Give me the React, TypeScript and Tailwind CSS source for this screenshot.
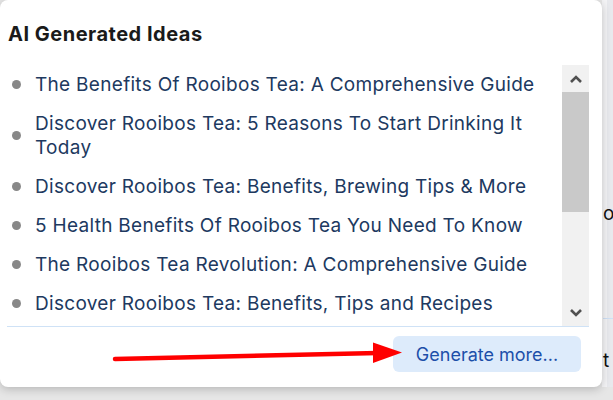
const ideas = [
  "The Benefits Of Rooibos Tea: A Comprehensive Guide",
  "Discover Rooibos Tea: 5 Reasons To Start Drinking It Today",
  "Discover Rooibos Tea: Benefits, Brewing Tips & More",
  "5 Health Benefits Of Rooibos Tea You Need To Know",
  "The Rooibos Tea Revolution: A Comprehensive Guide",
  "Discover Rooibos Tea: Benefits, Tips and Recipes",
];

const Chevron = ({ up }: { up?: boolean }) => (
  <svg width="14" height="10" viewBox="0 0 14 10" className={up ? "" : "rotate-180"}>
    <path d="M2 8 L7 3 L12 8" fill="none" stroke="#505050" strokeWidth="2.6" />
  </svg>
);

export default function App() {
  return (
    <div className="relative w-[613px] h-[400px] overflow-hidden bg-[#e7e7e7] font-['Inter','Noto_Sans',sans-serif]">
      <div className="flex h-[387px]">
        {/* popup panel */}
        <div className="relative z-10 w-[602px] shrink-0 rounded-[8px] bg-white pt-[20px] shadow-[0_2px_10px_rgba(0,0,0,0.22)]">
          <h2 className="px-2 text-[20px] font-bold leading-[28px] tracking-[0.5px] text-[#1a1a1a]">AI Generated Ideas</h2>

          <div className="mx-[7px] mt-[17px] flex h-[262px] w-[582px] border-b border-[#cfe2f6]">
            <ul className="flex-1 overflow-hidden">
              {ideas.map((idea) => (
                <li key={idea} className="flex items-center py-[7.5px] pl-[5px]">
                  <span className="h-[9px] w-[9px] shrink-0 rounded-full bg-[#888888]" />
                  <span className="ml-[14px] text-[19px] leading-[24px] tracking-[0.3px] text-[#20395f]">{idea}</span>
                </li>
              ))}
            </ul>
            <div className="flex w-[27px] flex-col bg-[#f1f1f1]">
              <div className="flex h-[27px] items-center justify-center">
                <Chevron up />
              </div>
              <div className="h-[120px] bg-[#c9c9c9]" />
              <div className="flex-1" />
              <div className="flex h-[27px] items-center justify-center">
                <Chevron />
              </div>
            </div>
          </div>

          <div className="flex justify-end pr-[21px] pt-[9px]">
            <button className="flex h-[36px] w-[188px] items-center justify-center rounded-[6px] bg-[#ddebfb] text-[18px] text-[#1c4fa9]">
              Generate more...
            </button>
          </div>
        </div>

        {/* page behind the popup */}
        <div className="flex flex-1 overflow-hidden bg-[#f4f4f6]">
          <div className="w-[5px]" />
          <div className="flex-1 bg-[#e8e9ed]" />
        </div>
      </div>
      <div className="flex h-[13px] bg-[#e6e6e6]" />

      {/* bits of page text peeking out at the right */}
      <div className="absolute left-[603px] top-[203px] text-[19px] leading-[22px] text-[#111]">o</div>
      <div className="absolute left-[603px] top-[318px] h-px w-[10px] bg-[#cfe0f5]" />
      <div className="absolute left-[603px] top-[350px] text-[19px] leading-[22px] text-[#111]">t</div>

      {/* red annotation arrow */}
      <svg className="absolute left-0 top-0 z-20" width="613" height="400">
        <line x1="115" y1="359" x2="378" y2="353" stroke="#ff0000" strokeWidth="4.5" strokeLinecap="round" />
        <polygon points="373,342.5 402,352.5 373,363" fill="#ff0000" />
      </svg>
    </div>
  );
}
